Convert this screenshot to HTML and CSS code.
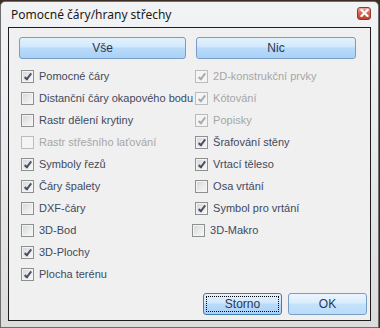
FILE: index.html
```html
<!DOCTYPE html>
<html lang="cs">
<head>
    <meta charset="UTF-8">
    <title>Pomocné čáry/hrany střechy</title>
    <link rel="stylesheet" href="styles.css">
</head>
<body>
    <div class="window">
        <div class="titlebar">
            <span class="title">Pomocné čáry/hrany střechy</span>
            <span class="close">
                <svg width="9" height="8" viewBox="0 0 9 8">
                    <path d="M1.5 1 L7.5 7 M7.5 1 L1.5 7" stroke="#fff" stroke-width="2.2" stroke-linecap="square"/>
                </svg>
            </span>
        </div>

        <div class="client">
            <div class="top-buttons">
                <button class="button all">Vše</button>
                <button class="button none">Nic</button>
            </div>

            <div class="options">
                <div class="column">
                    <label class="option"><span class="box checked"></span>Pomocné čáry</label>
                    <label class="option"><span class="box"></span>Distanční čáry okapového bodu</label>
                    <label class="option"><span class="box"></span>Rastr dělení krytiny</label>
                    <label class="option disabled"><span class="box"></span>Rastr střešního laťování</label>
                    <label class="option"><span class="box checked"></span>Symboly řezů</label>
                    <label class="option"><span class="box checked"></span>Čáry špalety</label>
                    <label class="option"><span class="box"></span>DXF-čáry</label>
                    <label class="option"><span class="box"></span>3D-Bod</label>
                    <label class="option"><span class="box checked"></span>3D-Plochy</label>
                    <label class="option"><span class="box checked"></span>Plocha terénu</label>
                </div>
                <div class="column right">
                    <label class="option disabled"><span class="box checked"></span>2D-konstrukční prvky</label>
                    <label class="option disabled"><span class="box checked"></span>Kótování</label>
                    <label class="option disabled"><span class="box checked"></span>Popisky</label>
                    <label class="option"><span class="box checked"></span>Šrafování stěny</label>
                    <label class="option"><span class="box checked"></span>Vrtací těleso</label>
                    <label class="option"><span class="box"></span>Osa vrtání</label>
                    <label class="option"><span class="box checked"></span>Symbol pro vrtání</label>
                    <label class="option shifted"><span class="box"></span>3D-Makro</label>
                </div>
            </div>

            <div class="footer">
                <button class="button focused">Storno</button>
                <button class="button ok">OK</button>
            </div>
        </div>
    </div>
</body>
</html>
```

FILE: styles.css
```css
* {
    margin: 0;
    padding: 0;
    box-sizing: border-box;
}

body {
    width: 380px;
    height: 328px;
    background: #3b2c24;
    font-family: "Liberation Sans", Arial, sans-serif;
    overflow: hidden;
}

.window {
    width: 379px;
    height: 327px;
    margin-top: 1px;
    border: 1px solid #6d6d6d;
    border-radius: 5px 5px 0 0;
    background: linear-gradient(180deg, #f2f3f5 0%, #e9ebee 40%, #dcdcdc 100%);
    padding: 0 7px 6px 7px;
    display: flex;
    flex-direction: column;
}

.titlebar {
    height: 25px;
    display: flex;
    align-items: center;
    justify-content: space-between;
    padding-left: 3px;
}

.title {
    font-family: "Noto Sans", "Liberation Sans", sans-serif;
    font-size: 12px;
    color: #1a1a1a;
    margin-top: -1px;
}

.close {
    width: 14px;
    height: 13px;
    margin-top: -3px;
    border: 1px solid #8a3a30;
    border-radius: 3px;
    background: linear-gradient(180deg, #e9a99b 0%, #d4624f 50%, #c2402c 100%);
    display: flex;
    align-items: center;
    justify-content: center;
}

.client {
    flex: 1;
    border: 1px solid #1e1e1e;
    background: #f0f0f0;
    display: flex;
    flex-direction: column;
    padding: 9px 3px 5px 10px;
}

.button {
    font-family: "Liberation Sans", Arial, sans-serif;
    font-size: 12px;
    color: #2a3552;
    height: 22px;
    border: 1px solid #7a9cc4;
    border-radius: 3px;
    background: linear-gradient(180deg, #e4f2fd 0%, #d0e8fc 45%, #b9dbf9 50%, #a9d1f7 100%);
}

.top-buttons {
    display: flex;
    gap: 10px;
}

.top-buttons .all {
    width: 167px;
}

.top-buttons .none {
    width: 160px;
}

.options {
    display: flex;
    margin-top: 6px;
}

.column {
    width: 178px;
    padding-left: 2px;
}

.option {
    height: 22px;
    display: flex;
    align-items: center;
    font-size: 11px;
    white-space: nowrap;
    color: #414a5c;
}

.option.disabled {
    color: #a6a6a6;
}

.option.shifted {
    margin-left: -3px;
}

.box {
    flex: none;
    width: 13px;
    height: 13px;
    margin-right: 5px;
    border: 1px solid #8e8f8f;
    background: linear-gradient(135deg, #d2d4d6 0%, #e8e9ea 50%, #f8f8f8 100%);
    box-shadow: inset 0 0 0 1px #f4f4f4;
    position: relative;
}

.box.checked::after {
    content: "";
    position: absolute;
    left: 4px;
    top: 1px;
    width: 2px;
    height: 6px;
    border: solid #4a5068;
    border-width: 0 2px 2px 0;
    transform: rotate(38deg);
}

.option.disabled .box {
    border-color: #bcbcbc;
    background: #f4f4f4;
    box-shadow: none;
}

.option.disabled .box.checked::after {
    border-color: #ababab;
}

.footer {
    margin-top: auto;
    display: flex;
    justify-content: flex-end;
    gap: 6px;
}

.footer .button {
    width: 79px;
}

.footer .focused {
    border-color: #3c7fb1;
    outline: 1px dotted #000;
    outline-offset: -4px;
}

.footer .ok {
    background: linear-gradient(180deg, #eaf5fe 0%, #d9edfd 45%, #c4e2fb 50%, #b8dcfa 100%);
}
```
